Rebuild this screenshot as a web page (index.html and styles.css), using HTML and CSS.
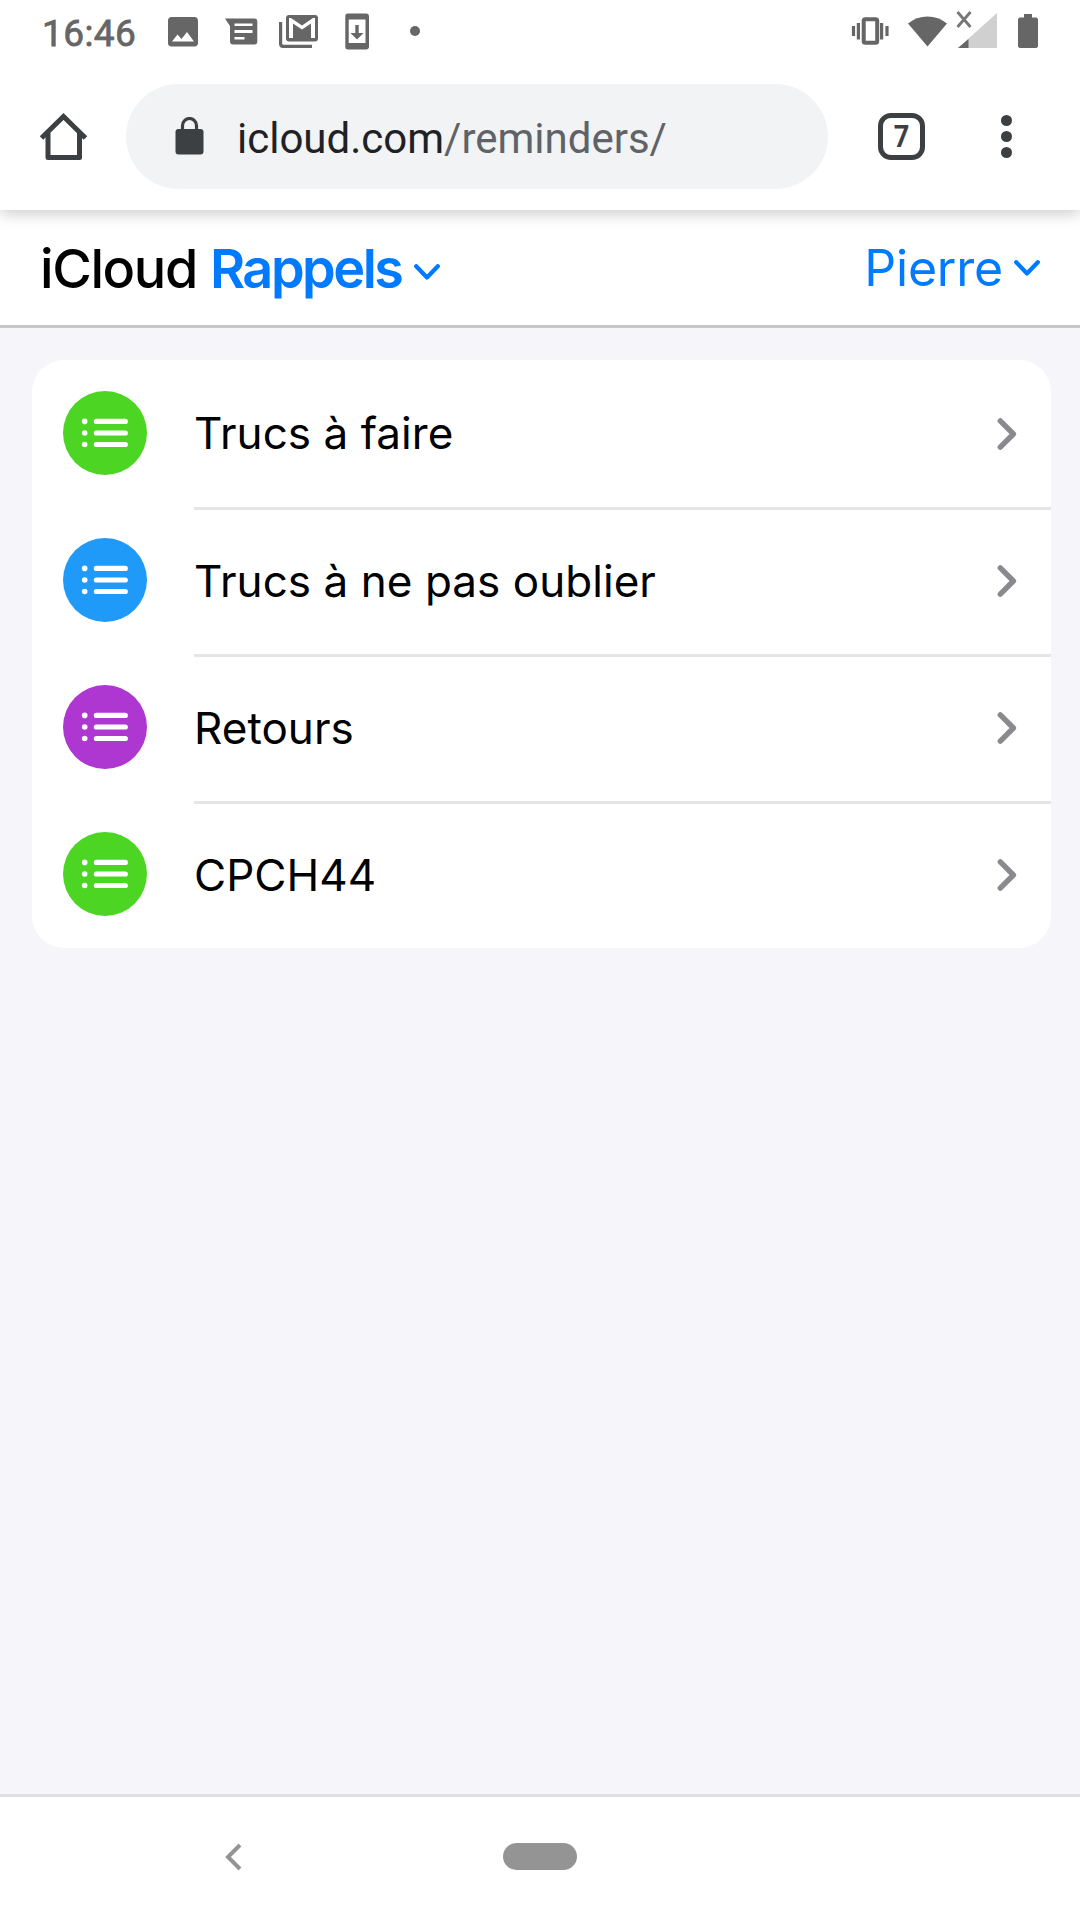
FILE: index.html
```html
<!DOCTYPE html>
<html lang="fr">
<head>
    <meta charset="UTF-8">
    <meta name="viewport" content="width=device-width, initial-scale=1.0">
    <title>iCloud Rappels</title>

    <link rel="stylesheet" href="styles.css">
</head>
<body>

    <!-- list icon and arrow, shared by all the rows -->
    <svg class="defs">
        <symbol id="list-icon" viewBox="0 0 84 84">
            <circle cx="21.7" cy="30.4" r="2.8"/>
            <circle cx="21.7" cy="42" r="2.8"/>
            <circle cx="21.7" cy="53.5" r="2.8"/>
            <path d="M33.4 30.4H62.3M33.4 42H62.3M33.4 53.5H62.3" stroke="white" stroke-width="5.2" stroke-linecap="round"/>
        </symbol>
        <symbol id="arrow" viewBox="0 0 20 32">
            <path d="M3.3 2.9L16.4 16L3.3 29.1" fill="none" stroke="#8a8a8e" stroke-width="5.4" stroke-linecap="round" stroke-linejoin="round"/>
        </symbol>
        <symbol id="chevron" viewBox="0 0 26 16">
            <path d="M2.2 2.2L13 13.5L23.8 2.2" fill="none" stroke="#007aff" stroke-width="4.2" stroke-linecap="round" stroke-linejoin="round"/>
        </symbol>
    </svg>

    <div class="status-bar">
        <span class="clock">16:46</span>
        <svg class="notifications" width="260" height="62" viewBox="164 0 260 62" fill="#666">
            <path fill-rule="evenodd" d="M171.500 17H194.500A3.300 3.300 0 0 1 198 20.500V43A3.300 3.300 0 0 1 194.500 46.500H171.500A3.300 3.300 0 0 1 168 43V20.500A3.300 3.300 0 0 1 171.500 17ZM172 41.500H194L187 32L181.500 39L177.500 34.500Z"/>
            <path fill-rule="evenodd" d="M225 18.500H254.500A3 3 0 0 1 257.300 21.500V41.500A3 3 0 0 1 254.500 44.500H233A3 3 0 0 1 230 41.500V26ZM234.500 23.500V26H252.500V23.500ZM234.500 30V33H252.500V30ZM234.500 37V39.500H244.500V37Z"/>
            <path fill-rule="evenodd" d="M289 15H315A3 3 0 0 1 318 18V38.500A3 3 0 0 1 315 41.500H289A3 3 0 0 1 286 38.500V18A3 3 0 0 1 289 15ZM289 18V38H293V23.500L302 29.500L311 23.500V38H315V18H313L302 25.500L291 18Z"/>
            <path d="M280.600 22V44A2.500 2.500 0 0 0 283 46.300H312" fill="none" stroke="#666" stroke-width="3.200"/>
            <path fill-rule="evenodd" d="M348 13.500H366A2.800 2.800 0 0 1 369 16.500V46.500A2.800 2.800 0 0 1 366 49.500H348A2.800 2.800 0 0 1 345.300 46.500V16.500A2.800 2.800 0 0 1 348 13.500ZM348.700 19.500V43H365.500V19.500Z"/>
            <path d="M355.300 25H358.700V33H363.500L357 39.500L350.500 33H355.300Z"/>
            <circle cx="415" cy="31" r="5"/>
        </svg>
        <svg class="system-icons" width="190" height="62" viewBox="850 0 190 62" fill="#666">
            <rect x="863.700" y="19.200" width="13.500" height="23.500" rx="1.500" fill="none" stroke="#666" stroke-width="4"/>
            <path d="M853.500 26V36M858.400 23V39.500M881.600 23V39.500M887 26V36" stroke="#666" stroke-width="3.200"/>
            <path d="M908 23.500A31 31 0 0 1 947 23.500L927.500 46.500Z"/>
            <path d="M957.500 12L970.500 27M970.500 12L957.500 27" stroke="#777" stroke-width="2.800"/>
            <path d="M958 48L997 13V48Z" fill="#d0d0d0"/>
            <path d="M958 48L968.500 39V48Z"/>
            <path d="M1024 14H1032V17.500H1036.500L1038 19V46.500L1036.500 48H1019.500L1018 46.500V19L1019.500 17.500H1024Z"/>
        </svg>
    </div>

    <div class="browser-bar">
        <svg class="home" width="48" height="48" viewBox="0 0 48 48" fill="none" stroke="#3c4043" stroke-width="5">
            <path d="M1.500 25L23.500 3.500L45.500 25"/>
            <path d="M8 20V44.500H39.500V20" stroke-linejoin="round"/>
        </svg>
        <div class="address">
            <svg class="lock" width="29" height="38" viewBox="0 0 29 38">
                <rect x="0.500" y="12" width="28" height="25.500" rx="3" fill="#3c4043"/>
                <path d="M7.500 14V8.500A7 7 0 0 1 21.500 8.500V14" fill="none" stroke="#3c4043" stroke-width="3.200"/>
            </svg>
            <p class="url">icloud.com<span>/reminders/</span></p>
        </div>
        <div class="tabs"><span>7</span></div>
        <div class="menu">
            <i></i>
            <i></i>
            <i></i>
        </div>
    </div>

    <header>
        <h1>iCloud <span>Rappels</span></h1>
        <svg class="chevron chevron-app"><use href="#chevron"/></svg>
        <p class="user">Pierre</p>
        <svg class="chevron chevron-user"><use href="#chevron"/></svg>
    </header>

    <main>
        <ul>
            <li>
                <svg class="icon green"><use href="#list-icon"/></svg>
                <div class="row"><p>Trucs à faire</p><svg class="arrow"><use href="#arrow"/></svg></div>
            </li>
            <li>
                <svg class="icon blue"><use href="#list-icon"/></svg>
                <div class="row"><p>Trucs à ne pas oublier</p><svg class="arrow"><use href="#arrow"/></svg></div>
            </li>
            <li>
                <svg class="icon purple"><use href="#list-icon"/></svg>
                <div class="row"><p>Retours</p><svg class="arrow"><use href="#arrow"/></svg></div>
            </li>
            <li>
                <svg class="icon green"><use href="#list-icon"/></svg>
                <div class="row"><p>CPCH44</p><svg class="arrow"><use href="#arrow"/></svg></div>
            </li>
        </ul>
    </main>

    <nav>
        <svg class="back" width="18" height="28" viewBox="0 0 18 28">
            <path d="M15 2L3 14L15 26" fill="none" stroke="#949494" stroke-width="4"/>
        </svg>
        <div class="home-pill"></div>
    </nav>

</body>
</html>
```

FILE: styles.css
```css
*{
    margin:0;
    padding:0;
    box-sizing:border-box;
}

body{
    display:flex;
    flex-direction:column;
    height:1920px;
    background-color:#f5f5fa;
    font-family:Inter, sans-serif;
}

svg{
    display:block;
    flex:none;
}

.defs{
    width:0;
    height:0;
    position:absolute;
}

/* android status bar */
.status-bar{
    display:flex;
    height:62px;
    background-color:white;
    padding-left:42px;
    z-index:2;
}

.clock{
    width:122px;
    padding-top:4px;
    font:400 37px/60px Roboto, sans-serif;
    letter-spacing:.4px;
    color:#666;
    -webkit-text-stroke:.8px #666;
}

.system-icons{
    margin-left:426px;
}

/* chrome toolbar */
.browser-bar{
    display:flex;
    align-items:center;
    height:148px;
    padding:1px 0 0 40px;
    background-color:white;
    box-shadow:0 3px 15px rgba(0,0,0,.22);
    z-index:1;
}

.address{
    display:flex;
    align-items:center;
    width:702px;
    height:105px;
    margin-left:38px;
    padding-left:49px;
    border-radius:53px;
    background-color:#f1f3f4;
}

.lock{
    margin-bottom:2px;
}

.url{
    margin:5px 0 0 33px;
    font-family:Roboto, sans-serif;
    font-size:42px;
    line-height:50px;
    color:#202124;
    white-space:nowrap;
}

.url span{
    color:#5f6368;
}

.tabs{
    width:47px;
    height:47px;
    margin-left:50px;
    border:5px solid #3c4043;
    border-radius:13px;
    font:bold 32px/37px Roboto, sans-serif;
    text-align:center;
    color:#3c4043;
}

.tabs span{
    display:block;
    transform:scaleX(.85);
}

.menu{
    display:flex;
    flex-direction:column;
    gap:5px;
    margin-left:76px;
}

.menu i{
    width:11px;
    height:11px;
    border-radius:50%;
    background-color:#3c4043;
}

header{
    display:flex;
    height:118px;
    padding-left:40px;
    border-bottom:3px solid #c6c6c6;
    background-color:white;
}

h1{
    padding-top:27px;
    font-size:54px;
    line-height:64px;
    font-weight:500;
    letter-spacing:-1.4px;
    white-space:nowrap;
}

h1 span{
    font-weight:600;
    letter-spacing:-2.5px;
    color:#007aff;
}

.chevron{
    width:26px;
    height:16px;
}

.chevron-app{
    margin:54px 0 0 12px;
}

.user{
    margin-left:auto;
    padding-top:26px;
    font-size:50px;
    line-height:64px;
    letter-spacing:-.2px;
    color:#007aff;
}

.chevron-user{
    margin:50px 40px 0 11px;
}

main{
    flex:1;
    padding:32px 29px 0 32px;
}

ul{
    list-style:none;
    background-color:white;
    border-radius:32px;
}

/* the separator overlaps the next row, so the rows stay 147px apart */
li{
    display:flex;
    height:147px;
    padding:31px 0 0 31px;
}

.icon{
    width:84px;
    height:84px;
    border-radius:50%;
    fill:white;
}

.green{
    background-color:#4cd522;
}

.blue{
    background-color:#209af9;
}

.purple{
    background-color:#ae37d1;
}

.row{
    flex:1;
    display:flex;
    justify-content:space-between;
    margin:0 0 -3px 47px;
    padding:11px 34px 0 0;
    border-bottom:3px solid #e5e5e5;
}

li:first-child p{
    margin-top:-1px;
}

li:last-child .row{
    border-bottom:none;
}

.row p{
    font-size:44px;
    line-height:64px;
    letter-spacing:.05px;
}

.arrow{
    width:20px;
    height:32px;
    margin-top:16px;
}

/* navigation bar */
nav{
    display:flex;
    height:126px;
    padding:49px 0 0 225px;
    border-top:3px solid #e0e0e0;
    background-color:white;
}

.back{
    margin-top:-3px;
}

.home-pill{
    width:74px;
    height:27px;
    margin:-3px 0 0 260px;
    border-radius:14px;
    background-color:#949494;
}
```
